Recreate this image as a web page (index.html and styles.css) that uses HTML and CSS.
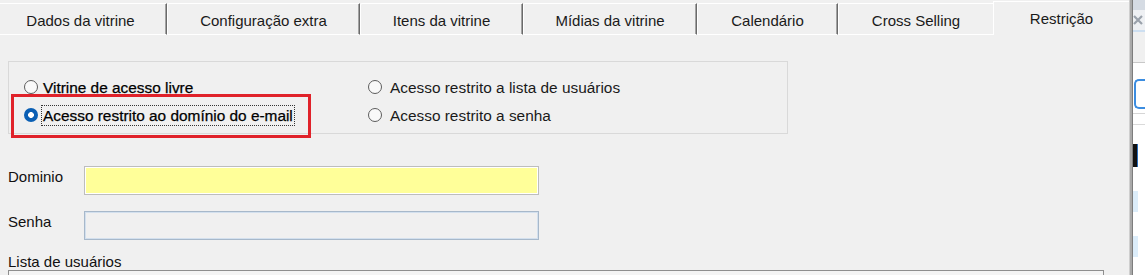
FILE: index.html
```html
<!DOCTYPE html>
<html lang="pt-BR">
<head>
<meta charset="utf-8">
<title>Restrição</title>
<link rel="stylesheet" href="styles.css">
</head>
<body>
<div class="app">
  <div class="main">
    <div class="tabs">
      <div class="tab t1">Dados da vitrine</div>
      <div class="tab t2">Configuração extra</div>
      <div class="tab t3">Itens da vitrine</div>
      <div class="tab t4">Mídias da vitrine</div>
      <div class="tab t5">Calendário</div>
      <div class="tab t6">Cross Selling</div>
      <div class="tab active">Restrição</div>
    </div>
    <div class="panel">
      <div class="group">
        <div class="radio left"><span class="dot"></span><span class="lbl">Vitrine de acesso livre</span></div>
        <div class="radio right"><span class="dot"></span><span class="lbl">Acesso restrito a lista de usuários</span></div>
        <div class="radio left"><span class="dot on"></span><span class="lbl focus">Acesso restrito ao domínio do e-mail</span></div>
        <div class="radio right"><span class="dot"></span><span class="lbl">Acesso restrito a senha</span></div>
      </div>
      <div class="fields">
        <div class="flabel">Dominio</div>
        <div class="input yellow"></div>
        <div class="flabel">Senha</div>
        <div class="input pwd"></div>
      </div>
      <div class="list-label">Lista de usuários</div>
      <div class="list-box"></div>
    </div>
    <div class="annot"></div>
  </div>
  <div class="divider"></div>
  <div class="side">
    <div class="s-top"></div>
    <div class="s-close">
      <svg width="10" height="10" viewBox="0 0 10 10"><path d="M1 1 L9 9 M9 1 L1 9" stroke="#9aa1ab" stroke-width="2.2" fill="none"/></svg>
    </div>
    <div class="s-bar"></div>
    <div class="s-gap"></div>
    <div class="s-input"></div>
    <div class="s-sep"></div>
    <div class="s-list">
      <div class="s-sel"></div>
      <div class="s-row"></div>
      <div class="s-row"></div>
    </div>
  </div>
</div>
</body>
</html>
```
FILE: styles.css
```css
html, body {
  margin: 0;
  padding: 0;
  background: #f0f0f0;
}
body {
  font-family: "Liberation Sans", Arial, sans-serif;
  color: #111;
  width: 1145px;
  height: 275px;
  overflow: hidden;
}
.app {
  display: flex;
  height: 275px;
}
.main {
  position: relative;
  width: 1129px;
  flex: none;
  overflow: hidden;
}

/* tabs */
.tabs {
  display: flex;
  align-items: flex-start;
  height: 35px;
  margin-left: -6px;
}
.tab {
  box-sizing: border-box;
  flex: none;
  height: 32px;
  margin-top: 3px;
  border-top: 1px solid #ffffff;
  border-left: 1px solid #ffffff;
  border-bottom: 1px solid #ffffff;
  border-right: 1px solid #6a6a6a;
  box-shadow: inset -1px 0 0 #a3a3a3;
  border-top-left-radius: 2px;
  padding-top: 8px;
  font-size: 15px;
  line-height: 17px;
  text-align: center;
  white-space: nowrap;
  color: #1a1a1a;
}
.t1 { width: 173px; }
.t2 { width: 193px; }
.t3 { width: 163px; }
.t4 { width: 174px; }
.t5 { width: 141px; }
.t6 { width: 155px; border-right: none; box-shadow: none; }
.tab.active {
  width: 136px;
  height: 34px;
  margin-top: 1px;
  border-bottom: none;
  border-right: none;
  box-shadow: none;
  border-top-left-radius: 0;
}

/* panel */
.panel {
  padding-left: 8px;
}
.group {
  box-sizing: border-box;
  margin-top: 26px;
  width: 780px;
  height: 73px;
  border: 1px solid #d9d9d9;
  padding: 11px 0 4px 15px;
  display: grid;
  grid-template-columns: 344px 1fr;
  grid-auto-rows: 28px;
  align-items: center;
}
.radio {
  display: flex;
  align-items: center;
  font-size: 15.4px;
  white-space: nowrap;
}
.radio.left { gap: 3px; }
.radio.right { gap: 6px; }
.radio.left .lbl {
  color: #000;
  -webkit-text-stroke: 0.25px #000;
}
.radio.right .lbl {
  color: #1a1a1a;
}
.lbl {
  border: 1px solid transparent;
  padding: 0 1px;
  line-height: 19px;
}
.lbl.focus {
  border: 1px dotted #333;
}
.dot {
  box-sizing: border-box;
  width: 14px;
  height: 14px;
  border-radius: 50%;
  border: 1px solid #5c5c5c;
  background: #f9f9f9;
  flex: none;
}
.dot.on {
  border: none;
  background: radial-gradient(circle, #ffffff 0 2.6px, #0a5fb4 3.2px);
}

/* fields */
.fields {
  margin-top: 32px;
  display: grid;
  grid-template-columns: 76px 455px;
  grid-auto-rows: 29px;
  row-gap: 16px;
}
.flabel {
  padding-top: 2px;
  font-size: 15px;
  line-height: 17px;
  color: #111;
}
.input {
  box-sizing: border-box;
  height: 29px;
}
.input.yellow {
  background: #ffff99;
  border: 1px solid #bdbdbd;
  box-shadow: inset 0 0 0 1px #ffffff;
}
.input.pwd {
  background: #f0f0f0;
  border: 1px solid #a7b8ca;
  box-shadow: inset 0 0 0 1px #d3e0ee;
}
.list-label {
  margin-top: 13px;
  font-size: 15px;
  line-height: 17px;
  color: #111;
}
.list-box {
  box-sizing: border-box;
  width: 1096px;
  height: 40px;
  border: 1px solid #8e8e8e;
  background: #f4f4f4;
}

/* annotation overlay */
.annot {
  position: absolute;
  left: 11px;
  top: 94px;
  width: 300px;
  height: 44px;
  box-sizing: border-box;
  border: 3px solid #e0222a;
  pointer-events: none;
}

/* divider and side pane */
.divider {
  flex: none;
  width: 4px;
  background: linear-gradient(to right, #cfcfcf 0 1px, #a9a9a9 1px 3px, #7d7d7d 3px 4px);
}
.side {
  flex: 1;
  background: #ffffff;
  display: flex;
  flex-direction: column;
}
.s-top {
  height: 10px;
  background: #d5dbe3;
}
.s-close {
  height: 20px;
  background: #eef0f3;
  display: flex;
  align-items: center;
}
.s-bar {
  height: 2px;
  background: #cddff1;
}
.s-gap {
  height: 30px;
  background: #f0f0f0;
  border-bottom: 1px solid #c8c8c8;
}
.s-input {
  margin-top: 16px;
  margin-left: 1px;
  height: 30px;
  box-sizing: border-box;
  border: 2px solid #3c8de0;
  border-right: none;
  border-radius: 5px 0 0 5px;
}
.s-sep {
  margin-top: 4px;
  border-top: 1px solid #d6d6d6;
}
.s-list {
  margin-top: 10px;
  border-top: 1px solid #dadada;
  padding-top: 19px;
  flex: 1;
}
.s-sel {
  width: 4px;
  height: 23px;
  background: #111111;
  border-right: 1px solid #2a6ebd;
}
.s-row {
  margin-top: 24px;
  width: 5px;
  height: 21px;
  background: #dcedfa;
}
```
